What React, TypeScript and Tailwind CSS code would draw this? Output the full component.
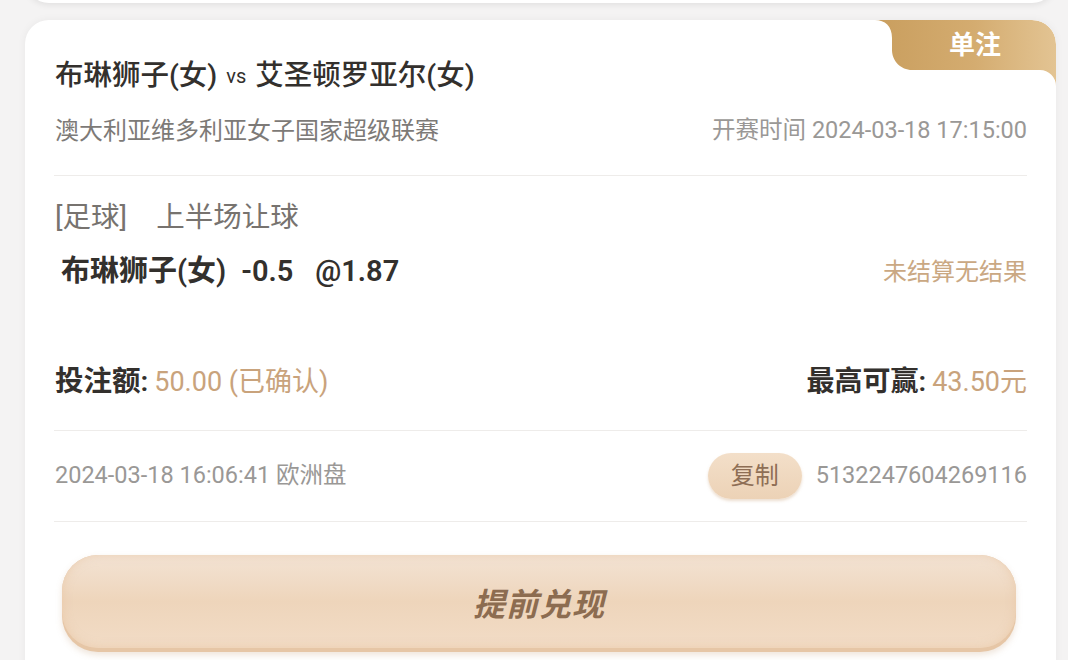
import React from "react";

const FONT = { fontFamily: 'Roboto, "Noto Sans CJK SC", "Noto Sans", sans-serif' };

function Badge() {
  return (
    <div className="absolute right-0 top-0 h-[66px] w-[181px]">
      <svg width="181" height="66" viewBox="0 0 181 66" className="absolute inset-0">
        <defs>
          <linearGradient id="bg" x1="0" y1="0" x2="1" y2="0">
            <stop offset="0" stopColor="#c99e5e" />
            <stop offset="0.55" stopColor="#d4ac70" />
            <stop offset="1" stopColor="#e3c493" />
          </linearGradient>
        </defs>
        <path
          d="M0,0 H157 A24,24 0 0 1 181,24 V66 A16,16 0 0 0 165,50 H37 C26,50 17,41 17,30 V18 C17,6 10,0 0,0 Z"
          fill="url(#bg)"
        />
      </svg>
      <div className="absolute left-[17px] right-0 top-0 flex h-[50px] items-center justify-center pl-[2px] text-[26px] font-bold text-white">
        单注
      </div>
    </div>
  );
}

export default function App() {
  return (
    <div className="h-[660px] w-[1068px] overflow-hidden bg-[#f4f3f3]" style={FONT}>
      <div className="ml-[25px] mr-[12px] mt-[-37px] h-[40px] rounded-b-[24px] bg-white shadow-[0_2px_6px_rgba(0,0,0,0.08)]" />
      <div className="relative ml-[25px] mr-[12px] mt-[17px] h-[700px] overflow-hidden rounded-[24px] bg-white px-[29px] pt-[36px] shadow-[0_0_8px_rgba(0,0,0,0.05)]">
        <Badge />
        <div className="flex h-[40px] items-center pl-px text-[28.5px] font-medium text-[#33302d]">
          <span>布琳狮子(女)</span>
          <span className="mx-[9px] text-[20px] font-normal">vs</span>
          <span>艾圣顿罗亚尔(女)</span>
        </div>
        <div className="mt-[19px] flex h-[32px] items-center justify-between text-[24px] text-[#7d7a77]">
          <span className="pl-px">澳大利亚维多利亚女子国家超级联赛</span>
          <span className="text-[23.5px] text-[#9a9896]">开赛时间 2024-03-18 17:15:00</span>
        </div>
        <div className="mt-[28px] h-px bg-[#eeecea]" />
        <div className="mt-[24px] flex h-[36px] items-center pl-px text-[28.5px] text-[#77736f]">
          <span>[足球]</span>
          <span className="ml-[29px]">上半场让球</span>
        </div>
        <div className="mt-[18px] flex h-[36px] items-center justify-between">
          <div className="flex items-center pl-[7px] text-[29px] font-semibold text-[#33302d]">
            <span>布琳狮子(女)</span>
            <span className="ml-[15px]">-0.5</span>
            <span className="ml-[22px]">@1.87</span>
          </div>
          <span className="text-[24px] text-[#caa883]">未结算无结果</span>
        </div>
        <div className="mt-[74px] flex h-[36px] items-center justify-between">
          <div className="flex items-center pl-px">
            <span className="text-[28.5px] font-semibold text-[#33302d]">投注额:</span>
            <span className="ml-[6px] text-[27px] text-[#c9a37c]">50.00 (已确认)</span>
          </div>
          <div className="flex items-center">
            <span className="text-[28px] font-semibold text-[#33302d]">最高可赢:</span>
            <span className="ml-[6px] text-[27px] text-[#c9a37c]">43.50元</span>
          </div>
        </div>
        <div className="mt-[30px] h-px bg-[#eeecea]" />
        <div className="mt-[22px] flex h-[46px] items-center justify-between text-[23.5px] text-[#9a9896]">
          <span className="pl-px">2024-03-18 16:06:41 欧洲盘</span>
          <div className="flex items-center">
            <div className="flex h-[46px] w-[94px] items-center justify-center rounded-full bg-gradient-to-b from-[#f3dfc9] to-[#ecd2b6] text-[24px] text-[#8e6e55] shadow-[0_2px_3px_rgba(200,160,120,0.35)]">
              复制
            </div>
            <span className="ml-[14px]">5132247604269116</span>
          </div>
        </div>
        <div className="mt-[22px] h-px bg-[#eeecea]" />
        <div className="ml-[8px] mr-[11px] mt-[33px] h-[97px] rounded-[36px] bg-[#e6c6a6] shadow-[0_3px_6px_rgba(190,150,110,0.25)]">
          <div className="flex h-[93px] items-center justify-center rounded-[36px] bg-gradient-to-b from-[#f3e3d4] via-[#eed5bb] to-[#f2dcc6] pt-[6px] shadow-[inset_0_0_10px_rgba(230,190,150,0.5)]">
            <span className="text-[32px] font-bold italic tracking-[1px] text-[#8c6c50]">提前兑现</span>
          </div>
        </div>
      </div>
    </div>
  );
}
